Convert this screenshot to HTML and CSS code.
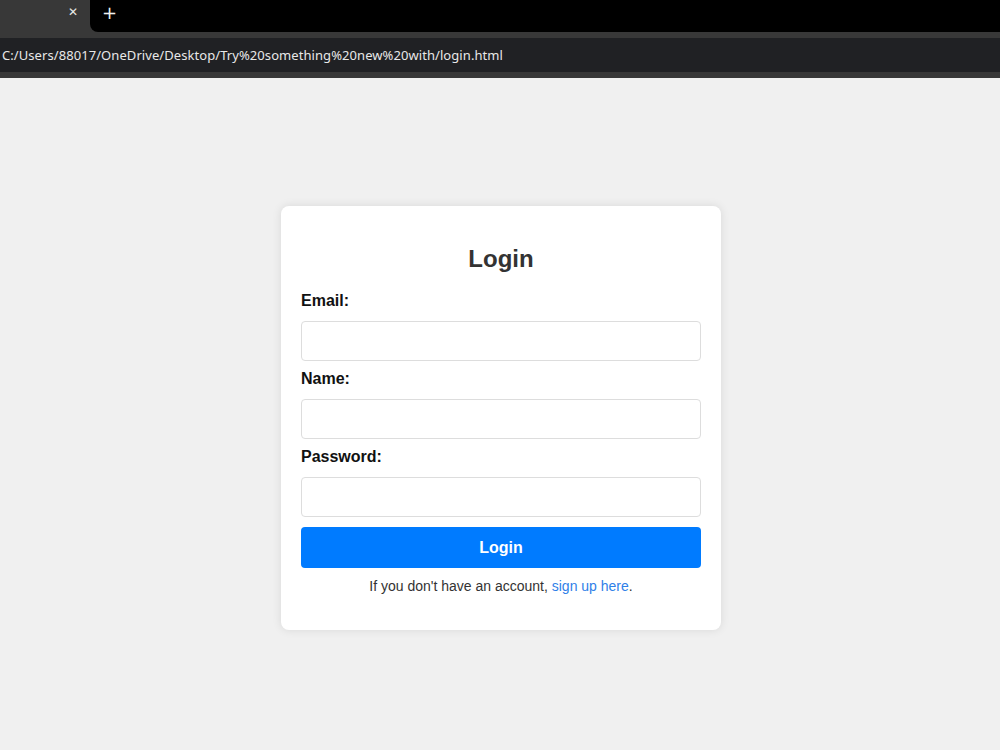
FILE: index.html
```html
<!DOCTYPE html>
<html lang="en">

<head>
    <meta charset="UTF-8">
    <meta name="viewport" content="width=device-width, initial-scale=1.0">
    <title>Login</title>
    <link rel="stylesheet" href="styles.css">
</head>

<body>
    <div class="browser-top">
        <div class="tab-strip">
            <div class="tab"><span class="tab-close">&#x2715;</span></div>
            <div class="tab-rest"><span class="new-tab">+</span></div>
        </div>
        <div class="toolbar">
            <div class="address">C:/Users/88017/OneDrive/Desktop/Try%20something%20new%20with/login.html</div>
        </div>
    </div>

    <div class="page">
        <div class="login-container">
            <h2>Login</h2>
            <form>
                <label for="email">Email:</label>
                <input type="email" id="email" name="email">
                <label for="name">Name:</label>
                <input type="text" id="name" name="name">
                <label for="password">Password:</label>
                <input type="password" id="password" name="password">
                <button type="submit">Login</button>
            </form>
            <p class="signup">If you don't have an account, <a href="#">sign up here</a>.</p>
        </div>
    </div>
</body>

</html>
```

FILE: styles.css
```css
body {
    margin: 0;
    font-family: 'Liberation Sans', Arial, sans-serif;
    background-color: #f0f0f0;
}

/* browser chrome */
.browser-top {
    background-color: #383838;
}

.tab-strip {
    display: flex;
    height: 32px;
}

.tab {
    width: 90px;
    position: relative;
}

.tab-close {
    position: absolute;
    left: 68px;
    top: 5px;
    color: #e8e8e8;
    font-family: 'DejaVu Sans', sans-serif;
    font-size: 12px;
    font-weight: bold;
}

.tab-rest {
    flex: 1;
    background-color: #000;
    border-bottom-left-radius: 8px;
    position: relative;
}

.new-tab {
    position: absolute;
    left: 12px;
    top: 2px;
    color: #f0f0f0;
    font-family: 'DejaVu Sans', sans-serif;
    font-size: 18px;
}

.toolbar {
    padding: 6px 0;
}

.address {
    height: 34px;
    line-height: 34px;
    background-color: #202124;
    color: #e8e8e8;
    font-family: 'Noto Sans', sans-serif;
    font-size: 13px;
    letter-spacing: 0.07px;
    padding-left: 2px;
    white-space: nowrap;
}

/* page */
.page {
    height: 672px;
    padding-top: 128px;
    box-sizing: border-box;
}

.login-container {
    width: 400px;
    margin: 0 auto;
    padding: 20px;
    background-color: #fff;
    border-radius: 8px;
    box-shadow: 0 0 10px rgba(0, 0, 0, 0.1);
    position: relative;
    left: 1px;
}

h2 {
    text-align: center;
    color: #333;
    font-size: 24px;
    margin: 19px 0 18px;
}

label {
    display: block;
    font-weight: bold;
    font-size: 16px;
    line-height: 19px;
    color: #111;
    margin-bottom: 11px;
}

input {
    display: block;
    width: 100%;
    box-sizing: border-box;
    height: 40px;
    padding: 10px;
    margin: 0 0 8px;
    border: 1px solid #ddd;
    border-radius: 4px;
    font-size: 16px;
}

button {
    display: block;
    width: 100%;
    height: 41px;
    margin-top: 10px;
    border: none;
    border-radius: 4px;
    background-color: #007bff;
    color: #fff;
    font-family: 'Liberation Sans', Arial, sans-serif;
    font-size: 16px;
    font-weight: bold;
    cursor: pointer;
}

.signup {
    text-align: center;
    font-size: 14px;
    color: #333;
    margin: 10px 0 16px;
}

.signup a {
    color: #2f80e8;
    text-decoration: none;
}
```
